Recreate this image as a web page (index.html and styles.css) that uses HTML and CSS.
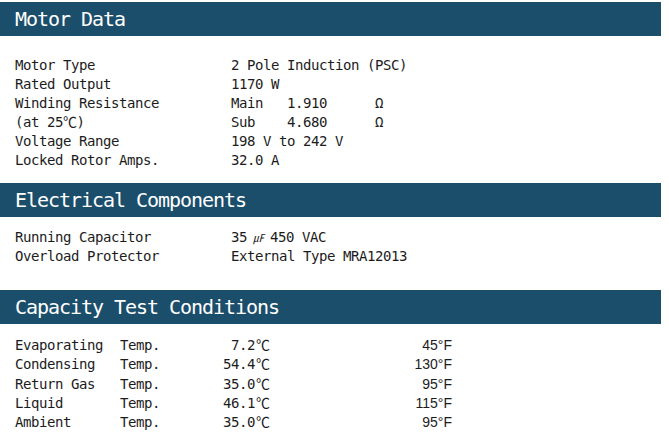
FILE: index.html
```html
<!DOCTYPE html>
<html>
<head>
<meta charset="utf-8">
<link rel="stylesheet" href="styles.css">
</head>
<body>
<section class="sec sec-motor">
  <h2 class="bar">Motor Data</h2>
  <div class="rows two">
    <div>Motor Type</div><div>2 Pole Induction (PSC)</div>
    <div>Rated Output</div><div>1170 W</div>
    <div>Winding Resistance</div><div class="pre">Main   1.910      Ω</div>
    <div>(at 25℃)</div><div class="pre">Sub    4.680      Ω</div>
    <div>Voltage Range</div><div>198 V to 242 V</div>
    <div>Locked Rotor Amps.</div><div>32.0 A</div>
  </div>
</section>
<section class="sec sec-elec">
  <h2 class="bar">Electrical Components</h2>
  <div class="rows two">
    <div>Running Capacitor</div><div class="pre">35<span class="uf">㎌</span>450 VAC</div>
    <div>Overload Protector</div><div>External Type MRA12013</div>
  </div>
</section>
<section class="sec sec-cap">
  <h2 class="bar">Capacity Test Conditions</h2>
  <div class="rows four">
    <div>Evaporating</div><div>Temp.</div><div class="c">7.2<span class="deg">℃</span></div><div class="f">45°F</div>
    <div>Condensing</div><div>Temp.</div><div class="c">54.4<span class="deg">℃</span></div><div class="f">130°F</div>
    <div>Return Gas</div><div>Temp.</div><div class="c">35.0<span class="deg">℃</span></div><div class="f">95°F</div>
    <div>Liquid</div><div>Temp.</div><div class="c">46.1<span class="deg">℃</span></div><div class="f">115°F</div>
    <div>Ambient</div><div>Temp.</div><div class="c">35.0<span class="deg">℃</span></div><div class="f">95°F</div>
  </div>
</section>
</body>
</html>
```

FILE: styles.css
```css
html, body {
  margin: 0;
  padding: 0;
  background: #ffffff;
}
body {
  padding-top: 2px;
  width: 661px;
  font-family: "DejaVu Sans Mono", "Noto Sans CJK KR", monospace;
  color: #1c1c1c;
}
.bar {
  margin: 0;
  height: 34px;
  background: #1b4e6b;
  color: #ffffff;
  font-family: "DejaVu Sans Mono", monospace;
  font-weight: normal;
  font-size: 20px;
  letter-spacing: -1.04px;
  line-height: 34px;
  padding-left: 15px;
  box-sizing: border-box;
}
.rows {
  display: grid;
  padding-left: 15px;
  font-size: 14px;
  letter-spacing: -0.43px;
  line-height: 19px;
}
.two {
  grid-template-columns: 216px 1fr;
}
.four {
  grid-template-columns: 105px 80px 71px 181px;
  line-height: 19.3px;
}
.pre {
  white-space: pre;
}
.uf {
  padding: 0 6px 0 6px;
  line-height: 0;
  font-family: "Noto Sans CJK KR", sans-serif;
  font-size: 11px;
  font-style: italic;
  letter-spacing: 0;
}
.c {
  text-align: right;
}
.deg {
  display: inline-block;
  width: 16px;
  text-align: center;
  letter-spacing: 0;
}
.f {
  text-align: right;
  font-family: "Liberation Sans", Arial, sans-serif;
  letter-spacing: 0;
  font-size: 14px;
}
.sec-motor .rows {
  padding-top: 20px;
  padding-bottom: 13px;
}
.sec-elec .rows {
  padding-top: 11px;
  padding-bottom: 24px;
}
.sec-cap .rows {
  padding-top: 12px;
}
```
